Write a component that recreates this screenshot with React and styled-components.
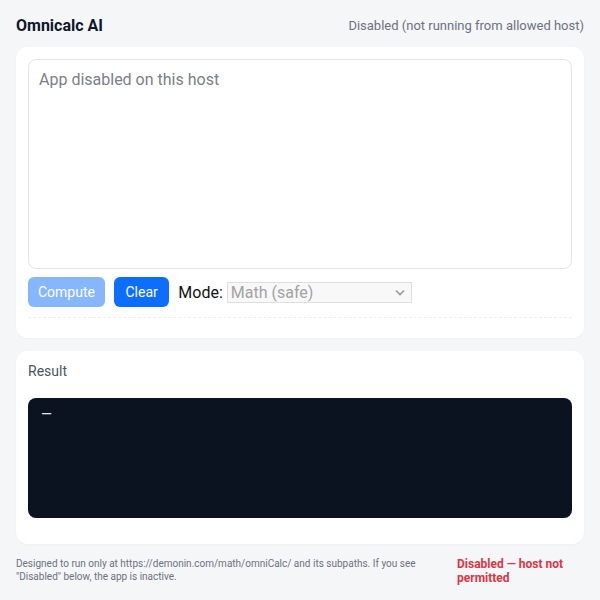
import styled, { createGlobalStyle } from "styled-components";

const GlobalStyle = createGlobalStyle`
  html, body {
    margin: 0;
    padding: 0;
    background: #f5f6f8;
  }
  body {
    font-family: Roboto, "Liberation Sans", sans-serif;
    color: #111827;
  }
`;

const Page = styled.div`
  width: 600px;
  height: 600px;
  box-sizing: border-box;
  padding: 14px 16px 0;
  display: flex;
  flex-direction: column;
`;

const Header = styled.header`
  display: flex;
  justify-content: space-between;
  align-items: center;
  height: 22px;
  margin-bottom: 11px;
`;

const Title = styled.h1`
  margin: 0;
  font-size: 16px;
  font-weight: 700;
  color: #0f172a;
`;

const Status = styled.span`
  font-size: 13px;
  color: #6b7280;
`;

const Card = styled.section`
  background: #fff;
  border-radius: 12px;
  padding: 12px;
  margin-bottom: ${p => p.$gap || 0}px;
  box-shadow: 0 1px 2px rgba(15, 23, 42, 0.03);
`;

const Input = styled.textarea`
  display: block;
  width: 100%;
  height: 210px;
  box-sizing: border-box;
  border: 1px solid #e3e5e8;
  border-radius: 8px;
  padding: 10px 10px;
  font-family: inherit;
  font-size: 16px;
  resize: none;
  background: #fff;

  &::placeholder {
    color: #7b7f86;
  }
`;

const Controls = styled.div`
  display: flex;
  align-items: center;
  gap: 9px;
  margin-top: 8px;
  padding-bottom: 10px;
  border-bottom: 1px dashed #eceef1;
`;

const Button = styled.button`
  height: 30px;
  padding: 0 ${p => p.$pad || 10}px;
  border: none;
  border-radius: 6px;
  font-family: inherit;
  font-size: 14px;
  color: #fff;
  background: ${p => (p.disabled ? "#86b7fe" : "#0d6efd")};
  opacity: 1;
`;

const ModeLabel = styled.label`
  display: flex;
  align-items: center;
  gap: 4px;
  font-size: 16px;
  color: #111;
`;

const Select = styled.div`
  position: relative;
  width: 185px;
  height: 21px;
  box-sizing: border-box;
  border: 1px solid #dedede;
  background: #f8f8f8;
  color: #a3a3a3;
  font-size: 16px;
  line-height: 19px;
  padding-left: 3px;
`;

const Chevron = styled.svg`
  position: absolute;
  right: 6px;
  top: 6px;
`;

const Spacer = styled.div`
  height: 8px;
`;

const ResultLabel = styled.div`
  font-size: 14px;
  line-height: 16px;
  color: #4b5563;
  margin: 0 0 19px;
`;

const Output = styled.pre`
  margin: 0;
  height: 120px;
  box-sizing: border-box;
  background: #0b1220;
  border-radius: 8px;
  padding: 8px 13px;
  color: #e5e7eb;
  font-family: Roboto, sans-serif;
  font-size: 14px;
`;

const BottomSpace = styled.div`
  height: 14px;
`;

const Footer = styled.footer`
  display: flex;
  justify-content: space-between;
  align-items: flex-start;
  margin-top: 13px;
`;

const Note = styled.p`
  margin: 0;
  width: 420px;
  font-size: 10px;
  line-height: 13px;
  color: #6b7280;
`;

const Alert = styled.div`
  width: 127px;
  font-size: 12px;
  font-weight: 700;
  line-height: 14px;
  color: #dc3545;
`;

export default function App() {
  return (
    <>
      <GlobalStyle />
      <Page>
        <Header>
          <Title>Omnicalc AI</Title>
          <Status>Disabled (not running from allowed host)</Status>
        </Header>
        <Card $gap={13}>
          <Input placeholder="App disabled on this host" disabled />
          <Controls>
            <Button disabled>Compute</Button>
            <Button $pad={11.5}>Clear</Button>
            <ModeLabel>
              Mode:
              <Select>
                Math (safe)
                <Chevron width="10" height="7" viewBox="0 0 10 7">
                  <path d="M1 1.5l4 4 4-4" fill="none" stroke="#9a9a9a" strokeWidth="1.6" />
                </Chevron>
              </Select>
            </ModeLabel>
          </Controls>
          <Spacer />
        </Card>
        <Card>
          <ResultLabel>Result</ResultLabel>
          <Output>—</Output>
          <BottomSpace />
        </Card>
        <Footer>
          <Note>
            Designed to run only at https://demonin.com/math/omniCalc/ and its subpaths. If you see
            "Disabled" below, the app is inactive.
          </Note>
          <Alert>Disabled — host not permitted</Alert>
        </Footer>
      </Page>
    </>
  );
}
